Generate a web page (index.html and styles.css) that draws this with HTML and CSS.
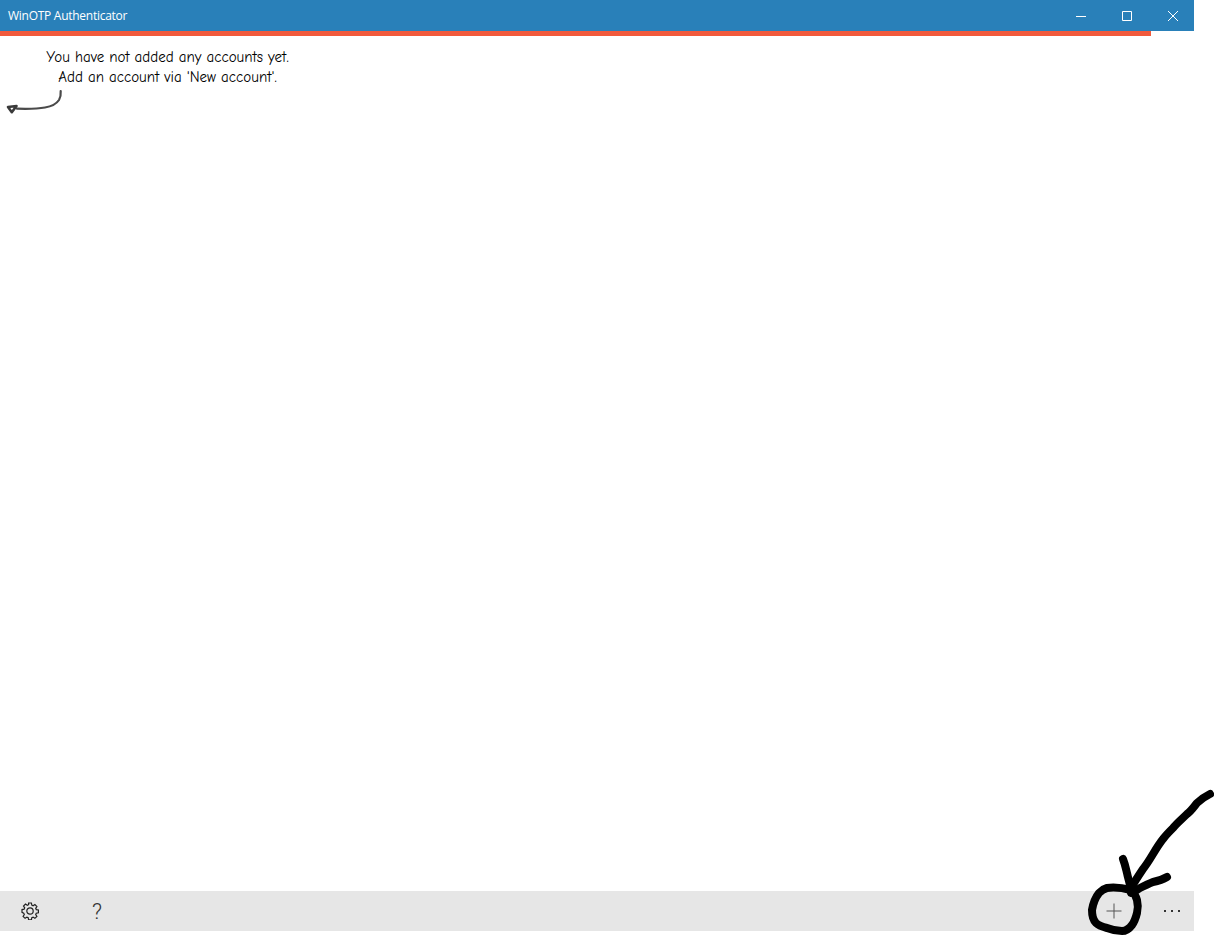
FILE: index.html
```html
<!DOCTYPE html>
<html lang="en">
<head>
<meta charset="utf-8">
<title>WinOTP Authenticator</title>
<link rel="stylesheet" href="styles.css">
</head>
<body>
<div class="window">
  <header class="titlebar">
    <span class="title">WinOTP Authenticator</span>
    <div class="caption">
      <button class="cap-btn" aria-label="Minimize"><svg width="12" height="12" viewBox="0 0 12 12"><path d="M1 6.500h10" class="cap-line"/></svg></button>
      <button class="cap-btn" aria-label="Maximize"><svg width="12" height="12" viewBox="0 0 12 12"><path d="M1.500 1.500h9v9h-9z" class="cap-line"/></svg></button>
      <button class="cap-btn" aria-label="Close"><svg width="12" height="12" viewBox="0 0 12 12"><path d="M1 1l10 10M11 1L1 11" class="cap-line"/></svg></button>
    </div>
  </header>
  <div class="progress"><div class="progress-fill"></div></div>
  <main class="content">
    <div class="hint">
      <p class="hint-text">You have not added any accounts yet.<br>Add an account via 'New account'.</p>
      <svg class="hint-arrow" width="60" height="30" viewBox="0 0 60 30">
        <path d="M54.700 4C55 8 54.500 10.500 53 13C50 17.500 45 19.500 39 20.500C31 22 21 22 11 21.700" class="arrow-stroke"/>
        <path d="M2 20L10.500 19L5.800 25.200Z" class="arrow-head"/>
      </svg>
    </div>
  </main>
  <footer class="commandbar">
    <div class="cmd-group">
      <button class="cmd-btn" aria-label="Settings">
        <svg width="18" height="18" viewBox="0 0 18 18"><path class="cmd-gear" d="M7.600 1h2.800l.4 2.100 1.300.6 1.800-1.200 2 2-1.200 1.800.6 1.300 2.100.4v2.800l-2.100.4-.6 1.300 1.200 1.800-2 2-1.800-1.200-1.300.6-.4 2.100H7.600l-.4-2.100-1.300-.6-1.800 1.200-2-2 1.200-1.800-.6-1.300L1 10.400V7.600l2.100-.4.6-1.300-1.200-1.800 2-2 1.800 1.200 1.300-.6z"/><circle class="cmd-gear" cx="9" cy="9" r="3.200"/></svg>
      </button>
      <button class="cmd-btn cmd-help" aria-label="Help">?</button>
    </div>
    <div class="cmd-group cmd-right">
      <button class="cmd-btn cmd-add" aria-label="New account">
        <svg width="18" height="18" viewBox="0 0 18 18"><path class="cmd-plus" d="M9 1.500v15M1.500 9h15"/></svg>
      </button>
      <button class="cmd-more" aria-label="More"><i class="dot"></i><i class="dot"></i><i class="dot"></i></button>
    </div>
  </footer>
</div>
<svg class="scribble" width="1214" height="935" viewBox="0 0 1214 935">
  <path d="M1210 794C1204 797 1200 800 1197 803C1193 808 1191 811 1187 814C1182 819 1177 823 1173 828C1169 832 1166 835 1163 839C1159 844 1156 849 1153 854C1150 859 1147 864 1143 869C1139 875 1135 881 1131 888"/>
  <path d="M1123 859C1125 864 1126 869 1127 873C1128 878 1130 884 1131 890"/>
  <path d="M1167 877C1162 880 1158 881 1153 882C1148 884 1144 886 1140 888C1137 890 1134 892 1131 893"/>
  <path d="M1131 890C1123 888 1114 887 1107 888C1103 889 1101 891 1099 893C1095 898 1093 904 1092 910C1092 915 1093 920 1096 923C1099 926 1103 927 1107 928C1112 930 1117 931 1122 931C1125 931 1129 929 1132 925C1135 921 1136 917 1137 913C1138 909 1138 904 1137 900C1136 896 1134 893 1131 890Z"/>
</svg>
</body>
</html>
```

FILE: styles.css
```css
* { box-sizing: border-box; }
html, body { margin: 0; padding: 0; background: #fff; }
body { width: 1214px; height: 935px; position: relative; overflow: hidden; font-family: "Open Sans", "Liberation Sans", sans-serif; }
button { border: 0; background: none; padding: 0; margin: 0; color: inherit; font: inherit; }

.window { width: 1194px; height: 931px; display: flex; flex-direction: column; background: #fff; }

.titlebar { height: 31px; flex: none; display: flex; align-items: center; justify-content: space-between; background: #2980b9; color: #fff; padding-left: 8px; }
.title { font-size: 12px; line-height: 16px; letter-spacing: -0.27px; }
.caption { display: flex; height: 100%; margin-right: -2px; }
.cap-btn { width: 46px; height: 100%; display: flex; align-items: center; justify-content: center; }
.cap-btn svg { display: block; }
.cap-line { fill: none; stroke: #fff; stroke-width: 1; }

.progress { height: 5px; flex: none; background: #fff; }
.progress-fill { width: 1151px; height: 100%; background: #f15a3c; }

.content { flex: 1; min-height: 0; padding: 11px 0 0 6px; }
.hint { width: 326px; }
.hint-text { margin: 0; width: 323px; text-align: center; font-family: "Comic Sans MS", "Comic Neue", cursive; font-size: 15px; line-height: 20px; color: #000; }
.hint-arrow { display: block; }
.arrow-stroke { fill: none; stroke: #4a4a4a; stroke-width: 2.2; stroke-linecap: round; }
.arrow-head { fill: #fff; stroke: #3a3a3a; stroke-width: 2.6; stroke-linejoin: round; }

.commandbar { height: 40px; flex: none; background: #e6e6e6; display: flex; align-items: center; justify-content: space-between; }
.cmd-group { display: flex; height: 100%; align-items: center; padding-left: 6px; }
.cmd-btn { width: 48px; height: 100%; display: flex; align-items: center; justify-content: center; color: #333; }
.cmd-btn + .cmd-btn { margin-left: 19px; }
.cmd-help { font-family: "Roboto", "Liberation Sans", sans-serif; font-weight: 300; font-size: 22px; }
.cmd-gear { fill: none; stroke: #222; stroke-width: 1.2; }
.cmd-plus { fill: none; stroke: #555; stroke-width: 1; }
.cmd-right { padding-left: 0; }
.cmd-add { margin-right: 12px; }
.cmd-more { width: 44px; height: 100%; display: flex; align-items: center; justify-content: center; gap: 5px; }
.dot { display: block; width: 2px; height: 2px; background: #333; }

.scribble { position: absolute; left: 0; top: 0; pointer-events: none; }
.scribble path { fill: none; stroke: #000; stroke-width: 8; stroke-linecap: round; stroke-linejoin: round; }
```
